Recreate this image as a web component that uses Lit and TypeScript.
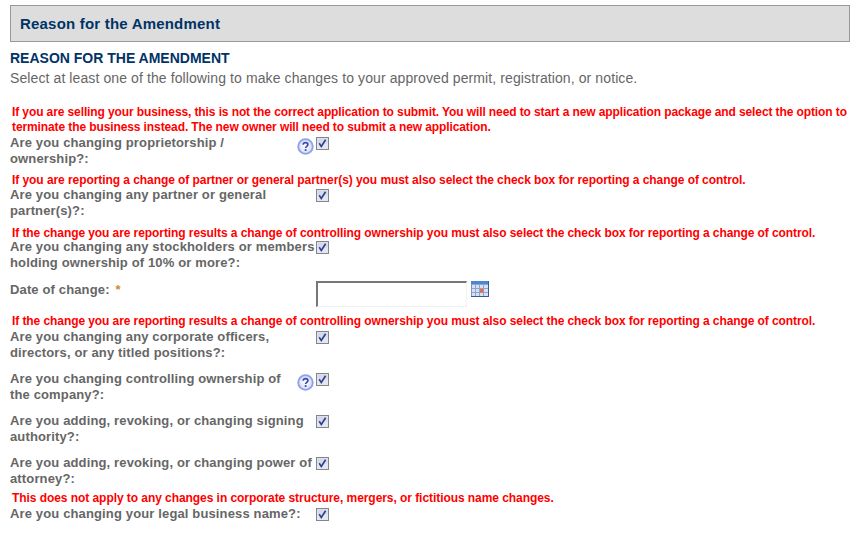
import { LitElement, html, css, svg } from "lit";
import { customElement } from "lit/decorators.js";

const help = html`<svg class="help" width="17" height="17" viewBox="0 0 17 17"><defs><radialGradient id="hg" cx="50%" cy="50%" r="55%"><stop offset="0" stop-color="#ffffff"/><stop offset="0.65" stop-color="#e2e7fb"/><stop offset="1" stop-color="#b4c0f2"/></radialGradient></defs><circle cx="8.500" cy="8.500" r="7.300" fill="url(#hg)" stroke="#8ea2ea" stroke-width="1.800"/><path d="M6.100 6.600c.2-1.300 1.100-2 2.400-2 1.400 0 2.400.8 2.400 2 0 1.800-2.300 1.800-2.300 3.500" fill="none" stroke="#3a4aa8" stroke-width="1.700"/><rect x="7.700" y="11.100" width="1.800" height="1.800" fill="#3a4aa8"/></svg>`;

const check = html`<svg class="check" width="13" height="13" viewBox="0 0 13 13"><rect x=".5" y=".5" width="12" height="12" fill="#e4e7f2" stroke="#858585"/><rect x="1.500" y="1.500" width="10" height="5" fill="#d5daea"/><path d="M3.200 6.300l2.100 3.200L9.600 2.800" fill="none" stroke="#2c3f8f" stroke-width="1.600"/></svg>`;

const cal = html`<svg class="cal" width="18" height="16" viewBox="0 0 18 16"><rect x="0" y="0" width="18" height="16" fill="#d6e2f4"/><rect x="0" y="0" width="18" height="3" fill="#4a86d8"/>${svg`<path d="M0 3.500h18M0 7.500h18M0 11.500h18M4.500 4v12M8.500 4v12M12.500 4v12" stroke="#8ea6cc" stroke-width="1"/><rect x="9" y="8" width="3.500" height="3.500" fill="#e8694f"/><path d="M17.500 0v16M0 15.500h18" stroke="#3b5a85" stroke-width="1"/><path d="M.5 3v12" stroke="#7f95bd" stroke-width="1"/>`}</svg>`;

type Row = { note?: string; label: string; help?: boolean; noteClass?: string };
const changeOfControl = "If the change you are reporting results a change of controlling ownership you must also select the check box for reporting a change of control.";
const rows: Row[] = [
  { label: "Are you changing proprietorship /\nownership?:", help: true, noteClass: "first",
    note: "If you are selling your business, this is not the correct application to submit. You will need to start a new application package and select the option to\nterminate the business instead. The new owner will need to submit a new application." },
  { label: "Are you changing any partner or general\npartner(s)?:", noteClass: "low1",
    note: "If you are reporting a change of partner or general partner(s) you must also select the check box for reporting a change of control." },
  { label: "Are you changing any stockholders or members\nholding ownership of 10% or more?:", noteClass: "low2",
    note: changeOfControl },
];
const rows2: Row[] = [
  { label: "Are you changing any corporate officers,\ndirectors, or any titled positions?:", note: changeOfControl },
  { label: "Are you changing controlling ownership of\nthe company?:", help: true },
  { label: "Are you adding, revoking, or changing signing\nauthority?:" },
  { label: "Are you adding, revoking, or changing power of\nattorney?:" },
  { label: "Are you changing your legal business name?:", noteClass: "last",
    note: "This does not apply to any changes in corporate structure, mergers, or fictitious name changes." },
];

@customElement("app-root")
export class AppRoot extends LitElement {
  static styles = css`
    :host { display: block; width: 856px; height: 550px; background: #fff; overflow: hidden; font-family: "Liberation Sans", Arial, sans-serif; }
    .page { padding: 5px 6px 0 10px; }
    .bar { height: 35px; border: 1px solid #999; background: #ddd; display: flex; align-items: center; padding-left: 9px; color: #003366; font-size: 15px; font-weight: bold; letter-spacing: 0.2px; }
    h2 { margin: 8px 0 0; font-size: 14px; line-height: 16px; color: #003366; font-weight: bold; }
    .sub { margin: 4px 0 0; font-size: 14px; line-height: 17px; color: #666; letter-spacing: 0.1px; }
    .note { color: #f00; font-size: 12px; font-weight: bold; line-height: 15px; padding-left: 2px; letter-spacing: -0.08px; white-space: pre; margin-top: 5px; }
    .note.first { margin-top: 18px; letter-spacing: -0.105px; }
    .note.low1 { margin-top: 6px; margin-bottom: -1px; letter-spacing: -0.065px; }
    .note.low2 { margin-top: 7px; margin-bottom: -2px; }
    .note.last { margin-top: 4px; letter-spacing: -0.06px; }
    .row { display: grid; grid-template-columns: 306px 1fr; min-height: 32px; }
    .label { position: relative; color: #666; font-size: 13px; font-weight: bold; line-height: 16px; letter-spacing: 0.14px; white-space: pre; }
    .help { position: absolute; left: 287px; top: 3px; }
    .check { display: block; margin-top: 2px; }
    .gap { margin-top: 10px; }
    .date { display: grid; grid-template-columns: 306px 1fr; margin-top: 10px; height: 28px; }
    .date .label { padding-top: 1px; }
    .req { color: #d08a2e; margin-left: 2px; }
    .field { display: flex; align-items: flex-start; gap: 4px; }
    .input { box-sizing: border-box; width: 151px; height: 26px; border: 1px solid #f1f1f1; border-top: 2px solid #777; border-left: 2px solid #777; background: #fff; }
  `;

  row(r: Row, gap: boolean) {
    return html`
      ${r.note ? html`<div class="note ${r.noteClass ?? ""}">${r.note}</div>` : ""}
      <div class="row ${!r.note && gap ? "gap" : ""}">
        <div class="label">${r.label}${r.help ? help : ""}</div>
        <div>${check}</div>
      </div>`;
  }

  render() {
    return html`<div class="page">
      <div class="bar">Reason for the Amendment</div>
      <h2>REASON FOR THE AMENDMENT</h2>
      <p class="sub">Select at least one of the following to make changes to your approved permit, registration, or notice.</p>
      ${rows.map((r) => this.row(r, false))}
      <div class="date">
        <div class="label">Date of change: <span class="req">*</span></div>
        <div class="field"><div class="input"></div>${cal}</div>
      </div>
      ${rows2.map((r) => this.row(r, true))}
    </div>`;
  }
}
